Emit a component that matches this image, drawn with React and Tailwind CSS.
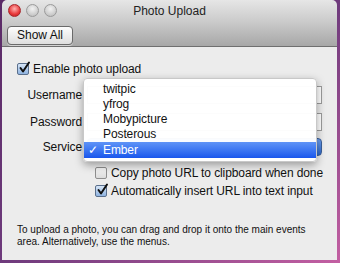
import React from 'react'

const font = { fontFamily: '"Liberation Sans", Arial, sans-serif' }

function Check({ checked }) {
  return (
    <span className={`relative inline-block w-[12px] h-[12px] rounded-[2px] border shrink-0 ${checked ? 'border-[#5a6f8c] bg-gradient-to-b from-[#d7e6f7] to-[#8fb3e0]' : 'border-[#8e8e8e] bg-gradient-to-b from-[#f4f4f4] to-[#dcdcdc]'}`}>
      {checked && (
        <svg className="absolute left-[0px] top-[-3px]" width="13" height="13" viewBox="0 0 13 13">
          <path d="M2.5 7 L5 10.5 L11 1.5" fill="none" stroke="#111" strokeWidth="2" strokeLinecap="round" strokeLinejoin="round" />
        </svg>
      )}
    </span>
  )
}

function Light({ red }) {
  return (
    <span className={`inline-block w-[13px] h-[13px] rounded-full border ${red ? 'border-[#a8262a] bg-[radial-gradient(circle_at_50%_35%,#ffb3b0,#e8383a_60%,#b01f22)]' : 'border-[#9a9a9a] bg-[radial-gradient(circle_at_50%_35%,#f2f2f2,#cfcfcf_60%,#b4b4b4)]'}`} />
  )
}

const services = ['twitpic', 'yfrog', 'Mobypicture', 'Posterous']

export default function App() {
  return (
    <div className="w-[340px] h-[263px] overflow-hidden bg-gradient-to-br from-[#5a2a66] via-[#6e3a7c] to-[#c35fa2] pl-[2px]" style={font}>
      <div className="w-[335px] h-[260px] flex flex-col rounded-t-[5px] overflow-hidden">
        {/* title bar + toolbar */}
        <div className="h-[47px] bg-gradient-to-b from-[#e6e6e6] via-[#c9c9c9] to-[#a7a7a7] border-b border-[#6f6f6f] flex flex-col">
          <div className="h-[21px] relative flex items-center pl-[6px] gap-[5px]">
            <Light red />
            <Light />
            <Light />
            <div className="absolute inset-0 flex items-center justify-center text-[12px] text-[#222]">Photo Upload</div>
          </div>
          <div className="pl-[5px] pt-[1px]">
            <button className="h-[19px] w-[66px] rounded-[4px] border border-[#6a6a6a] bg-gradient-to-b from-[#fdfdfd] to-[#dedede] text-[12px] leading-none text-[#111] shadow-[0_1px_0_rgba(255,255,255,0.5)]">Show All</button>
          </div>
        </div>

        {/* content */}
        <div className="flex-1 bg-[#ececec] relative text-[12px] tracking-[-0.1px] text-[#111]">
          <div className="flex items-center gap-[4px] pl-[15px] pt-[15px] h-[29px]">
            <Check checked />
            <span>Enable photo upload</span>
          </div>

          <div className="flex items-center mt-[10px] h-[18px]">
            <span className="w-[81px] text-right pr-[1px]">Username</span>
            <div className="ml-[4px] w-[235px] h-[18px] bg-white border border-[#9b9b9b]" />
          </div>
          <div className="flex items-center mt-[9px] h-[18px]">
            <span className="w-[81px] text-right pr-[1px]">Password</span>
            <div className="ml-[4px] w-[235px] h-[18px] bg-white border border-[#9b9b9b]" />
          </div>
          <div className="flex items-center mt-[7px] h-[18px]">
            <span className="w-[81px] text-right pr-[1px]">Service</span>
            <div className="ml-[4px] w-[235px] h-[18px] rounded-[4px] bg-gradient-to-b from-[#6ea0f0] to-[#2d68c8] border border-[#3b5f99]" />
          </div>

          <div className="flex items-center gap-[4px] pl-[93px] mt-[10px] h-[14px] whitespace-nowrap">
            <Check />
            <span>Copy photo URL to clipboard when done</span>
          </div>
          <div className="flex items-center gap-[4px] pl-[93px] mt-[4px] h-[14px] whitespace-nowrap">
            <Check checked />
            <span>Automatically insert URL into text input</span>
          </div>

          <p className="pl-[15px] pr-[20px] mt-[26px] text-[10px] tracking-normal leading-[12px]">
            To upload a photo, you can drag and drop it onto the main events area. Alternatively, use the menus.
          </p>

          {/* open popup menu */}
          <div className="absolute left-[81px] top-[31px] w-[234px] bg-white/[0.97] rounded-[4px] shadow-[0_3px_8px_rgba(0,0,0,0.35)] border border-[#c8c8c8] py-[3px]">
            {services.map(s => (
              <div key={s} className="h-[15px] leading-[15px] pl-[19px]">{s}</div>
            ))}
            <div className="h-[16px] leading-[16px] bg-gradient-to-b from-[#5f93f7] to-[#1a56ec] text-white flex">
              <span className="w-[19px] pl-[4px]">✓</span>
              <span>Ember</span>
            </div>
          </div>
        </div>
      </div>
    </div>
  )
}
